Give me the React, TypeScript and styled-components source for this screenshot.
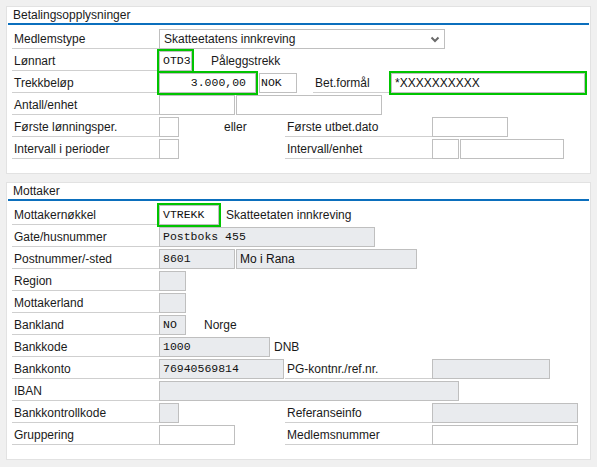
import React from "react";
import styled, { createGlobalStyle } from "styled-components";

const Global = createGlobalStyle`
  html, body { margin: 0; padding: 0; background: #f0f0f0; }
  body { font-family: "Liberation Sans", Arial, sans-serif; font-size: 12px; color: #1a1a1a; }
`;

const Page = styled.div`
  width: 597px;
  height: 467px;
  box-sizing: border-box;
  padding: 7px 7px 0 7px;
  display: flex;
  flex-direction: column;
  gap: 10px;
`;

const Panel = styled.section`
  background: #fff;
  box-shadow: 0 0 0 1px #e2e2e2;
  padding: 0 1px 14px 1px;
  display: flex;
  flex-direction: column;
`;

const Title = styled.div`
  height: 16px;
  line-height: 16px;
  padding-left: 5px;
  border-bottom: 2px solid #0b6fbd;
  color: #1a1a1a;
`;

const Rows = styled.div`
  display: flex;
  flex-direction: column;
  gap: 2px;
  padding: 4px 0 0 4px;
`;

const Row = styled.div`
  display: flex;
  align-items: stretch;
  height: 20px;
`;

const Label = styled.div<{ $w?: number; $ml?: number }>`
  width: ${(p) => p.$w ?? 147}px;
  margin-left: ${(p) => p.$ml ?? 0}px;
  box-sizing: border-box;
  height: 20px;
  line-height: 20px;
  padding-left: 2px;
  border-bottom: 1px solid #cfcfcf;
  white-space: nowrap;
  flex: none;
`;

const Plain = styled.div<{ $w?: number; $ml?: number; $pl?: number }>`
  ${(p) => (p.$w ? `width: ${p.$w}px; flex: none;` : "")}
  margin-left: ${(p) => p.$ml ?? 0}px;
  padding-left: ${(p) => p.$pl ?? 0}px;
  box-sizing: border-box;
  line-height: 20px;
  white-space: nowrap;
`;

const Field = styled.div<{
  $w: number;
  $ml?: number;
  $gray?: boolean;
  $mono?: boolean;
  $right?: boolean;
  $hl?: boolean;
  $pl?: number;
}>`
  width: ${(p) => p.$w}px;
  margin-left: ${(p) => p.$ml ?? 0}px;
  flex: none;
  box-sizing: border-box;
  height: 20px;
  border: 1px solid #bfbfbf;
  background: ${(p) => (p.$gray ? "#e9ebee" : "#fff")};
  outline: ${(p) => (p.$hl ? "2px solid #00c400" : "none")};
  position: relative;
  z-index: ${(p) => (p.$hl ? 1 : 0)};
  padding: 0 ${(p) => (p.$right ? 9 : 3)}px 0 ${(p) => p.$pl ?? 3}px;
  line-height: 18px;
  text-align: ${(p) => (p.$right ? "right" : "left")};
  font-family: ${(p) =>
    p.$mono
      ? `"Liberation Mono", "Courier New", monospace`
      : `"Liberation Sans", Arial, sans-serif`};
  font-size: ${(p) => (p.$mono ? "11.5px" : "12px")};
  color: #111;
  white-space: nowrap;
  overflow: hidden;
`;

const Select = styled.div<{ $w: number }>`
  width: ${(p) => p.$w}px;
  flex: none;
  box-sizing: border-box;
  height: 20px;
  border: 1px solid #bfbfbf;
  background: #fff;
  display: flex;
  align-items: center;
  justify-content: space-between;
  padding: 0 4px 0 4px;
  line-height: 18px;
`;

const Chevron = () => (
  <svg width="10" height="7" viewBox="0 0 10 7">
    <polyline
      points="1.5,1.5 5,5 8.5,1.5"
      fill="none"
      stroke="#6a6a6a"
      strokeWidth="2"
    />
  </svg>
);

export default function App() {
  return (
    <>
      <Global />
      <Page>
        <Panel>
          <Title>Betalingsopplysninger</Title>
          <Rows>
            <Row>
              <Label>Medlemstype</Label>
              <Select $w={286}>
                <span>Skatteetatens innkreving</span>
                <Chevron />
              </Select>
            </Row>
            <Row>
              <Label>Lønnart</Label>
              <Field $w={33} $mono $hl>
                OTD3
              </Field>
              <Plain $ml={19}>Påleggstrekk</Plain>
            </Row>
            <Row>
              <Label>Trekkbeløp</Label>
              <Field $w={97} $mono $right $hl>
                3.000,00
              </Field>
              <Field $w={38} $ml={3} $mono $pl={1}>
                NOK
              </Field>
              <Label $w={76} $ml={16}>
                Bet.formål
              </Label>
              <Field $w={194} $ml={2} $hl>
                *XXXXXXXXXX
              </Field>
            </Row>
            <Row>
              <Label>Antall/enhet</Label>
              <Field $w={76} />
              <Field $w={146} $ml={1} />
            </Row>
            <Row>
              <Label>Første lønningsper.</Label>
              <Field $w={20} />
              <Plain $w={106} $pl={45}>
                eller
              </Plain>
              <Label>Første utbet.dato</Label>
              <Field $w={76} />
            </Row>
            <Row>
              <Label>Intervall i perioder</Label>
              <Field $w={20} />
              <Plain $w={106} />
              <Label>Intervall/enhet</Label>
              <Field $w={27} />
              <Field $w={104} $ml={1} />
            </Row>
          </Rows>
        </Panel>

        <Panel>
          <Title>Mottaker</Title>
          <Rows>
            <Row>
              <Label>Mottakernøkkel</Label>
              <Field $w={60} $mono $hl>
                VTREKK
              </Field>
              <Plain $ml={7}>Skatteetaten innkreving</Plain>
            </Row>
            <Row>
              <Label>Gate/husnummer</Label>
              <Field $w={216} $gray $mono>
                Postboks 455
              </Field>
            </Row>
            <Row>
              <Label>Postnummer/-sted</Label>
              <Field $w={76} $gray $mono>
                8601
              </Field>
              <Field $w={181} $ml={1} $gray>
                Mo i Rana
              </Field>
            </Row>
            <Row>
              <Label>Region</Label>
              <Field $w={27} $gray />
            </Row>
            <Row>
              <Label>Mottakerland</Label>
              <Field $w={27} $gray />
            </Row>
            <Row>
              <Label>Bankland</Label>
              <Field $w={27} $gray $mono>
                NO
              </Field>
              <Plain $ml={18}>Norge</Plain>
            </Row>
            <Row>
              <Label>Bankkode</Label>
              <Field $w={111} $gray $mono>
                1000
              </Field>
              <Plain $ml={4}>DNB</Plain>
            </Row>
            <Row>
              <Label>Bankkonto</Label>
              <Field $w={125} $gray $mono>
                76940569814
              </Field>
              <Label $ml={1}>PG-kontnr./ref.nr.</Label>
              <Field $w={118} $gray />
            </Row>
            <Row>
              <Label>IBAN</Label>
              <Field $w={300} $gray />
            </Row>
            <Row>
              <Label>Bankkontrollkode</Label>
              <Field $w={20} $gray />
              <Plain $w={106} />
              <Label>Referanseinfo</Label>
              <Field $w={146} $gray />
            </Row>
            <Row>
              <Label>Gruppering</Label>
              <Field $w={76} />
              <Plain $w={50} />
              <Label>Medlemsnummer</Label>
              <Field $w={146} />
            </Row>
          </Rows>
        </Panel>
      </Page>
    </>
  );
}
